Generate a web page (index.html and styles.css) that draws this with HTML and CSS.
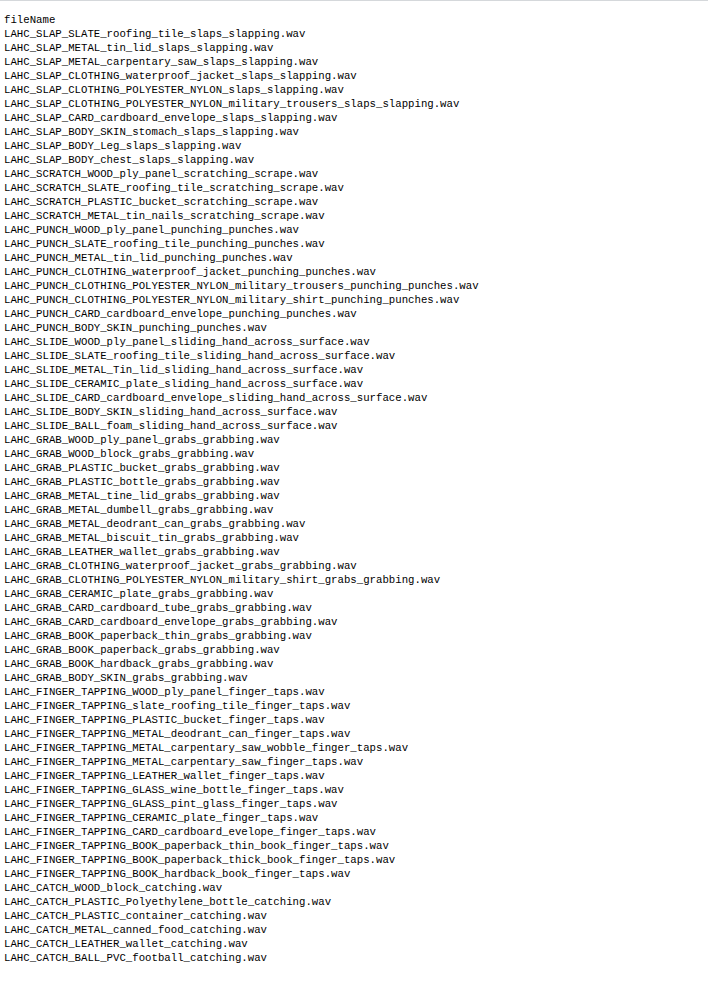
FILE: index.html
```html
<!DOCTYPE html>
<html>
<head>
<meta charset="utf-8">
<link rel="stylesheet" href="styles.css">
</head>
<body>
<div class="topline"></div>
<pre class="listing">fileName
LAHC_SLAP_SLATE_roofing_tile_slaps_slapping.wav
LAHC_SLAP_METAL_tin_lid_slaps_slapping.wav
LAHC_SLAP_METAL_carpentary_saw_slaps_slapping.wav
LAHC_SLAP_CLOTHING_waterproof_jacket_slaps_slapping.wav
LAHC_SLAP_CLOTHING_POLYESTER_NYLON_slaps_slapping.wav
LAHC_SLAP_CLOTHING_POLYESTER_NYLON_military_trousers_slaps_slapping.wav
LAHC_SLAP_CARD_cardboard_envelope_slaps_slapping.wav
LAHC_SLAP_BODY_SKIN_stomach_slaps_slapping.wav
LAHC_SLAP_BODY_Leg_slaps_slapping.wav
LAHC_SLAP_BODY_chest_slaps_slapping.wav
LAHC_SCRATCH_WOOD_ply_panel_scratching_scrape.wav
LAHC_SCRATCH_SLATE_roofing_tile_scratching_scrape.wav
LAHC_SCRATCH_PLASTIC_bucket_scratching_scrape.wav
LAHC_SCRATCH_METAL_tin_nails_scratching_scrape.wav
LAHC_PUNCH_WOOD_ply_panel_punching_punches.wav
LAHC_PUNCH_SLATE_roofing_tile_punching_punches.wav
LAHC_PUNCH_METAL_tin_lid_punching_punches.wav
LAHC_PUNCH_CLOTHING_waterproof_jacket_punching_punches.wav
LAHC_PUNCH_CLOTHING_POLYESTER_NYLON_military_trousers_punching_punches.wav
LAHC_PUNCH_CLOTHING_POLYESTER_NYLON_military_shirt_punching_punches.wav
LAHC_PUNCH_CARD_cardboard_envelope_punching_punches.wav
LAHC_PUNCH_BODY_SKIN_punching_punches.wav
LAHC_SLIDE_WOOD_ply_panel_sliding_hand_across_surface.wav
LAHC_SLIDE_SLATE_roofing_tile_sliding_hand_across_surface.wav
LAHC_SLIDE_METAL_Tin_lid_sliding_hand_across_surface.wav
LAHC_SLIDE_CERAMIC_plate_sliding_hand_across_surface.wav
LAHC_SLIDE_CARD_cardboard_envelope_sliding_hand_across_surface.wav
LAHC_SLIDE_BODY_SKIN_sliding_hand_across_surface.wav
LAHC_SLIDE_BALL_foam_sliding_hand_across_surface.wav
LAHC_GRAB_WOOD_ply_panel_grabs_grabbing.wav
LAHC_GRAB_WOOD_block_grabs_grabbing.wav
LAHC_GRAB_PLASTIC_bucket_grabs_grabbing.wav
LAHC_GRAB_PLASTIC_bottle_grabs_grabbing.wav
LAHC_GRAB_METAL_tine_lid_grabs_grabbing.wav
LAHC_GRAB_METAL_dumbell_grabs_grabbing.wav
LAHC_GRAB_METAL_deodrant_can_grabs_grabbing.wav
LAHC_GRAB_METAL_biscuit_tin_grabs_grabbing.wav
LAHC_GRAB_LEATHER_wallet_grabs_grabbing.wav
LAHC_GRAB_CLOTHING_waterproof_jacket_grabs_grabbing.wav
LAHC_GRAB_CLOTHING_POLYESTER_NYLON_military_shirt_grabs_grabbing.wav
LAHC_GRAB_CERAMIC_plate_grabs_grabbing.wav
LAHC_GRAB_CARD_cardboard_tube_grabs_grabbing.wav
LAHC_GRAB_CARD_cardboard_envelope_grabs_grabbing.wav
LAHC_GRAB_BOOK_paperback_thin_grabs_grabbing.wav
LAHC_GRAB_BOOK_paperback_grabs_grabbing.wav
LAHC_GRAB_BOOK_hardback_grabs_grabbing.wav
LAHC_GRAB_BODY_SKIN_grabs_grabbing.wav
LAHC_FINGER_TAPPING_WOOD_ply_panel_finger_taps.wav
LAHC_FINGER_TAPPING_slate_roofing_tile_finger_taps.wav
LAHC_FINGER_TAPPING_PLASTIC_bucket_finger_taps.wav
LAHC_FINGER_TAPPING_METAL_deodrant_can_finger_taps.wav
LAHC_FINGER_TAPPING_METAL_carpentary_saw_wobble_finger_taps.wav
LAHC_FINGER_TAPPING_METAL_carpentary_saw_finger_taps.wav
LAHC_FINGER_TAPPING_LEATHER_wallet_finger_taps.wav
LAHC_FINGER_TAPPING_GLASS_wine_bottle_finger_taps.wav
LAHC_FINGER_TAPPING_GLASS_pint_glass_finger_taps.wav
LAHC_FINGER_TAPPING_CERAMIC_plate_finger_taps.wav
LAHC_FINGER_TAPPING_CARD_cardboard_evelope_finger_taps.wav
LAHC_FINGER_TAPPING_BOOK_paperback_thin_book_finger_taps.wav
LAHC_FINGER_TAPPING_BOOK_paperback_thick_book_finger_taps.wav
LAHC_FINGER_TAPPING_BOOK_hardback_book_finger_taps.wav
LAHC_CATCH_WOOD_block_catching.wav
LAHC_CATCH_PLASTIC_Polyethylene_bottle_catching.wav
LAHC_CATCH_PLASTIC_container_catching.wav
LAHC_CATCH_METAL_canned_food_catching.wav
LAHC_CATCH_LEATHER_wallet_catching.wav
LAHC_CATCH_BALL_PVC_football_catching.wav</pre>
</body>
</html>
```
FILE: styles.css
```css
html, body {
  margin: 0;
  padding: 0;
  background: #ffffff;
}
.topline {
  height: 1px;
  background: #d5d8db;
}
.listing {
  margin: 0;
  padding: 12px 4px 0 4px;
  font-family: "Liberation Mono", "DejaVu Sans Mono", monospace;
  font-size: 10.7px;
  line-height: 14px;
  color: #000000;
  white-space: pre;
}
```
